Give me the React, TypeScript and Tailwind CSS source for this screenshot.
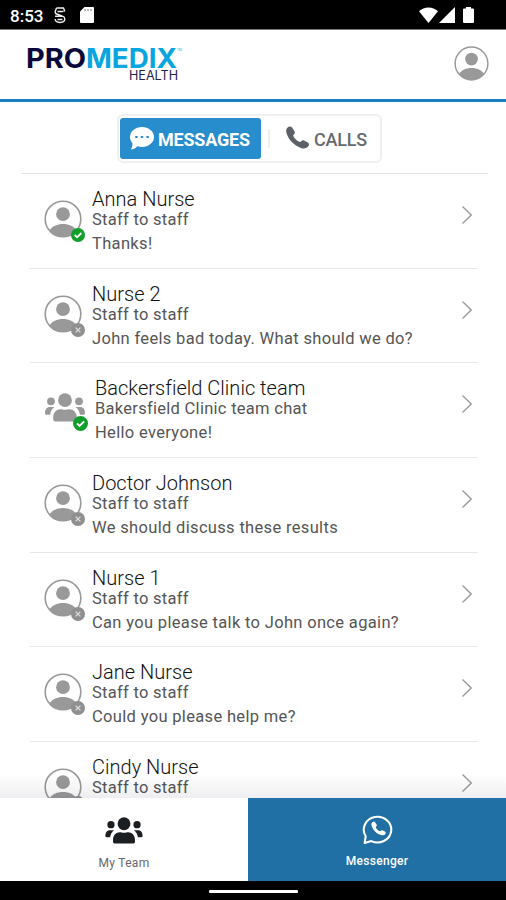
type Chat = { name: string; sub: string; msg: string; online?: boolean; group?: boolean };

const chats: Chat[] = [
  { name: 'Anna Nurse', sub: 'Staff to staff', msg: 'Thanks!', online: true },
  { name: 'Nurse 2', sub: 'Staff to staff', msg: 'John feels bad today. What should we do?' },
  { name: 'Backersfield Clinic team', sub: 'Bakersfield Clinic team chat', msg: 'Hello everyone!', online: true, group: true },
  { name: 'Doctor Johnson', sub: 'Staff to staff', msg: 'We should discuss these results' },
  { name: 'Nurse 1', sub: 'Staff to staff', msg: 'Can you please talk to John once again?' },
  { name: 'Jane Nurse', sub: 'Staff to staff', msg: 'Could you please help me?' },
  { name: 'Cindy Nurse', sub: 'Staff to staff', msg: '' },
];

function Avatar({ className }: { className: string }) {
  return (
    <svg viewBox="0 0 38 38" className={className} fill="none">
      <circle cx="19" cy="19" r="17.8" stroke="#999" strokeWidth="1.6" />
      <circle cx="19" cy="14.2" r="6.900" fill="#999" />
      <path d="M5.500 30.500C8 26.200 13 24 19 24s11 2.200 13.500 6.500C29 35 24 36.900 19 36.900S9 35 5.500 30.500Z" fill="#999" />
    </svg>
  );
}

function Team({ className }: { className: string }) {
  return (
    <svg viewBox="0 0 40 29" className={className} fill="currentColor">
      <circle cx="20" cy="7.200" r="6.900" />
      <circle cx="6" cy="8.300" r="3.900" />
      <circle cx="34" cy="8.300" r="3.900" />
      <path d="M10 28.400Q8.200 28.400 8.200 26.600V24.500C8.200 19.500 11.500 16.300 15.500 16.300c1.500 0 2.500.5 4.500.5s3-.5 4.500-.5c4 0 7.300 3.200 7.300 8.200v2.100q0 1.800-1.800 1.800Z" />
      <path d="M1.500 21.800Q0 21.800 0 20.300C0 16.300 2 14.100 4.800 14.100h4.700c-2.600 1.600-4 4.200-4.400 7.700ZM38.500 21.800q1.500 0 1.500-1.500C40 16.300 38 14.100 35.200 14.100h-4.700c2.600 1.600 4 4.200 4.400 7.700Z" />
    </svg>
  );
}

const Status = ({ online, className }: { online?: boolean; className: string }) => (
  <svg viewBox="0 0 14 14" className={`absolute ${className}`} fill="none" stroke="#fff">
    <circle cx="7" cy="7" r="7" fill={online ? '#0f9f2a' : '#8f8f8f'} stroke="none" />
    {online ? <path d="m3.700 7 2.400 2.300 4.300-4.300" strokeWidth="1.800" /> : <path d="m4.600 4.600 4.800 4.800m0-4.800L4.600 9.400" stroke="#ddd" strokeWidth="1.300" />}
  </svg>
);

const phonePath =
  'M1.700 1.600C3.200.2 5.200.1 6.300 1.500L8.800 5.400C9.600 6.700 9.300 7.900 8.200 8.800 7.400 9.500 7.400 10.300 8 11.300 9.300 13.600 11.200 15.200 13.400 16.300 14.400 16.800 15.200 16.600 15.900 15.800 16.800 14.800 18 14.700 19.200 15.300L22.800 17.200C24.200 18 24.400 19.400 23.600 20.700 22 23.200 19.200 24 16.200 23.100 8.600 20.700 2.600 14.700.5 7.400-.1 5.100.1 3.100 1.700 1.600Z';

export default function App() {
  return (
    <div className="flex h-[900px] w-[506px] flex-col overflow-hidden bg-white font-['Roboto',sans-serif] whitespace-nowrap">
      <header className="flex h-[30px] shrink-0 items-center border-b border-[#777] bg-black pl-[10px] text-white">
        <span className="w-[44px] pt-[3px] text-[17px] leading-[20px] font-medium">8:53</span>
        <svg viewBox="0 0 12 17" className="mt-[2px] h-[17px] w-[12px]" fill="none" stroke="#eee" strokeWidth="1.400">
          <path d="M2.500 1H9.500L10.800 4.500M2.500 1 1.200 4.500Q1.200 7 3.500 7.300L8.500 9.200Q10.800 10 10.800 12q0 3.200-4.800 3.500Q1.200 15.200 1.200 12M3.500 4.500h6M1 9.200h7.500M3.500 12.500h5" />
        </svg>
        <svg viewBox="0 0 14 16" className="mt-[1px] ml-[14px] h-[16px] w-[14px]"><path d="M4.500 0H13q1 0 1 1v14q0 1-1 1H1q-1 0-1-1V4.500Z" fill="#fff" /><path d="M5 2v2m3-2v2m3-2v2" stroke="#777" /></svg>
        <svg viewBox="0 0 19 16" className="ml-auto h-[16px] w-[19px]" fill="#fff"><path d="M9.500 16 0 4.200C5-.9 14-.9 19 4.200Z" /></svg>
        <svg viewBox="0 0 16 16" className="ml-[1px] h-[16px] w-[16px]" fill="#fff"><path d="M16 0v16H0Z" /></svg>
        <svg viewBox="0 0 11 16" className="mr-[32px] ml-[8px] h-[16px] w-[11px]" fill="#fff"><path d="M3 0h5v1.500h2q1 0 1 1V15q0 1-1 1H1q-1 0-1-1V2.500q0-1 1-1h2Z" /></svg>
      </header>

      <div className="flex h-[72px] shrink-0 items-start justify-between border-b-[3px] border-[#167dc1] pr-[17px] pl-[26px]">
        <svg viewBox="0 0 156 40" className="mt-[14px] h-[40px] w-[156px] overflow-visible font-['Inter',sans-serif]">
          <text x="0" y="24" fontSize="27" fontWeight="700" fill="#09083b" textLength="60" lengthAdjust="spacingAndGlyphs">PRO</text>
          <text x="60" y="24" fontSize="27" fontWeight="700" fill="#09a5df" textLength="91" lengthAdjust="spacingAndGlyphs">MEDIX</text>
          <text x="151" y="7" fontSize="3" fill="#09a5df">TM</text>
          <text x="103" y="36" fontSize="12.500" fontWeight="400" fill="#252247" textLength="49" lengthAdjust="spacingAndGlyphs">HEALTH</text>
        </svg>
        <Avatar className="mt-[16px] size-[35px]" />
      </div>

      <div className="mr-[18px] ml-[21px] flex h-[72px] shrink-0 items-start justify-center border-b border-[#e4e4e4] pt-[12px] pr-[10px]">
        <div className="flex h-[49px] w-[265px] items-center rounded-[6px] border-2 border-[#f0f0f0] px-[1px]">
          <div className="flex h-[41px] w-[141px] items-center rounded-[3px] bg-[#278dcd] pl-[10px] text-white">
            <svg viewBox="0 0 24 23" className="h-[23px] w-[24px]">
              <path d="M12 0C18.600 0 24 4.400 24 10s-5.400 10-12 10c-1.600 0-3.200-.3-4.600-.8C5.800 20.900 3.500 22.500.8 22.500c1-1.400 1.700-3.500 1.700-6.300C.9 14.500 0 12.300 0 10 0 4.400 5.400 0 12 0Z" fill="#fff" />
              <path d="M5.200 10h2.400m3.200 0h2.400m3.200 0h2.400" stroke="#278dcd" strokeWidth="2.200" />
            </svg>
            <span className="ml-[4px] pt-[2px] text-[18px] leading-[22px] font-bold tracking-[-0.2px]">MESSAGES</span>
          </div>
          <div className="ml-[7px] h-[19px] w-[2px] bg-[#eee]" />
          <svg viewBox="0 0 24 24" className="-mt-[3px] ml-[16px] size-[23px]" fill="#5b6167"><path d={phonePath} /></svg>
          <span className="ml-[5px] pt-[2px] text-[18px] leading-[22px] font-medium tracking-[-0.2px] text-[#666b70]">CALLS</span>
        </div>
      </div>

      <main className="relative min-h-0 flex-1 overflow-hidden">
        {chats.map((c) => (
          <div key={c.name} className="mr-[28px] ml-[30px] flex h-[94.660px] items-start border-b-[1.500px] border-[#e8e8e8]">
            {c.group ? (
              <div className="relative mt-[30px] ml-[15px] h-[29px] w-[40px] text-[#999]">
                <Team className="h-[29px] w-[40px]" />
                <Status online={c.online} className="top-[23px] left-[28px] size-[15px]" />
              </div>
            ) : (
              <div className="relative mt-[26px] ml-[14px] size-[38px]">
                <Avatar className="size-[38px]" />
                <Status online={c.online} className="-right-[3px] -bottom-[4px] size-[14px]" />
              </div>
            )}
            <div className="ml-[10px] flex flex-1 flex-col pt-[14px] text-[#111]">
              <span className="text-[20px] leading-[23px] font-light tracking-[0.020px]">{c.name}</span>
              <span className="text-[16.500px] leading-[18px] tracking-[0.280px] text-[#555]">{c.sub}</span>
              <span className="mt-[5px] text-[16.500px] leading-[20px] tracking-[0.330px] text-[#555]">{c.msg}</span>
            </div>
            <svg viewBox="0 0 10 18" className="mt-[32px] mr-[6px] h-[18px] w-[10px]" fill="none" stroke="#999" strokeWidth="1.300"><path d="m.5.5 8.700 8.500L.5 17.500" /></svg>
          </div>
        ))}
        <div className="pointer-events-none absolute inset-x-0 bottom-0 h-[24px] bg-gradient-to-b from-transparent to-[#101030]/7" />
      </main>

      <nav className="flex h-[83px] shrink-0">
        <div className="flex w-[248px] flex-col items-center bg-white text-[#1c1f22]">
          <Team className="mt-[19px] h-[27px] w-[38px]" />
          <span className="mt-[11px] text-[12px] leading-[16px] tracking-[0.3px] text-[#666]">My Team</span>
        </div>
        <div className="flex flex-1 flex-col items-center bg-[#206fa5] text-white">
          <svg viewBox="0 0 30 30" className="mt-[16px] size-[31px]" fill="none">
            <path d="M2.500 28 3.600 21.500A13.300 12.400 0 1 1 9 26.200Z" stroke="#fff" strokeWidth="2" strokeLinejoin="round" />
            <g transform="translate(9 7) scale(.58)" fill="#fff"><path d={phonePath} /></g>
          </svg>
          <span className="mt-[8px] text-[12px] leading-[16px] font-medium tracking-[0.300px]">Messenger</span>
        </div>
      </nav>
      <footer className="flex h-[19px] shrink-0 justify-center bg-black pt-[9px]">
        <div className="h-[3px] w-[89px] rounded-[1px] bg-white" />
      </footer>
    </div>
  );
}
